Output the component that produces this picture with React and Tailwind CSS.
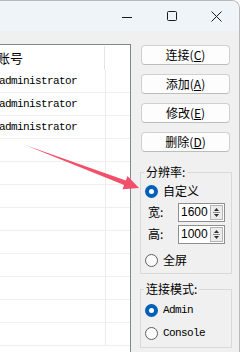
import React from "react";

const cjk = "font-['Noto_Sans_CJK_SC','Noto_Sans_CJK_JP',sans-serif]";
const mono = "font-['Liberation_Mono','DejaVu_Sans_Mono',monospace]";

function Radio({ checked }) {
  if (checked) {
    return (
      <span className="w-[13px] h-[13px] rounded-full bg-[#005fb8] flex items-center justify-center shrink-0">
        <span className="w-[5px] h-[5px] rounded-full bg-white" />
      </span>
    );
  }
  return <span className="w-[13px] h-[13px] rounded-full border border-[#5f5f5f] bg-[#fbfbfb] shrink-0" />;
}

function Btn({ label, k }) {
  return (
    <button className={`w-[89px] h-[20px] rounded-[4px] border border-[#d0d0d0] border-b-[#bcbcbc] bg-[#fdfdfd] text-[12px] leading-none text-black flex items-center justify-center ${cjk}`}>
      {label}(<span className="underline underline-offset-[1px]">{k}</span>)
    </button>
  );
}

function Spin({ value }) {
  return (
    <div className="w-[47px] h-[19px] border border-[#8f8f8f] bg-white flex items-center">
      <span className="flex-1 pl-[2px] text-[12px] leading-none text-black font-['Liberation_Sans',Arial,sans-serif]">{value}</span>
      <svg width="13" height="15" viewBox="0 0 13 15" className="mr-[1px] shrink-0">
        <rect x="0.5" y="0.5" width="12" height="14" fill="#ececec" stroke="#b4b4b4" />
        <path d="M4 6 L9 6 L6.5 3 Z" fill="#303030" />
        <line x1="3" y1="7.5" x2="10" y2="7.5" stroke="#8a8a8a" />
        <path d="M4 9 L9 9 L6.5 12 Z" fill="#303030" />
      </svg>
    </div>
  );
}

const rows = Array.from({ length: 12 });
const names = ["administrator", "administrator", "administrator"];

export default function App() {
  return (
    <div className="relative w-[241px] h-[352px] bg-white overflow-hidden">
      <div className="w-[240px] h-[360px] rounded-tr-[8px] border-t border-r border-[#b8b8b8] bg-[#f0f0f0] overflow-hidden flex flex-col">
        {/* title bar */}
        <div className="h-[30px] shrink-0 bg-[#eff4f9] flex justify-end">
          <div className="w-[45px] flex items-center justify-center">
            <svg width="10" height="10" viewBox="0 0 10 10">
              <line x1="0" y1="6.5" x2="10" y2="6.5" stroke="#1b1b1b" strokeWidth="1" />
            </svg>
          </div>
          <div className="w-[45px] flex items-center justify-center">
            <svg width="10" height="10" viewBox="0 0 10 10">
              <rect x="0.5" y="0.5" width="9" height="9" rx="1" fill="none" stroke="#1b1b1b" strokeWidth="1" />
            </svg>
          </div>
          <div className="w-[45px] flex items-center justify-center">
            <svg width="11" height="11" viewBox="0 0 11 11">
              <path d="M0.5 0.5 L10.5 10.5 M10.5 0.5 L0.5 10.5" stroke="#1b1b1b" strokeWidth="1" />
            </svg>
          </div>
        </div>

        {/* body */}
        <div className="flex flex-1">
          {/* list */}
          <div className="w-[131px] mt-[13px] border-t border-r border-[#828790] bg-white flex flex-col">
            <div className="h-[25px] flex">
              <div className={`w-[107px] -ml-[3px] pl-0 flex items-center text-[13px] text-black ${cjk}`}>账号</div>
              <div className="w-px mt-[1px] bg-[#e5e5e5]" />
            </div>
            {rows.map((_, i) => (
              <div key={i} className="h-[23px] flex border-b border-[#efefef]">
                <div className={`w-[107px] border-r border-[#ececec] flex items-center -ml-[1px] text-[11px] tracking-[-0.6px] text-black ${mono}`}>
                  {names[i] || ""}
                </div>
              </div>
            ))}
          </div>

          {/* right panel */}
          <div className="flex-1 flex flex-col pt-[14px]">
            <div className="pl-[10px] flex flex-col gap-[9px]">
              <Btn label="连接" k="C" />
              <Btn label="添加" k="A" />
              <Btn label="修改" k="E" />
              <Btn label="删除" k="D" />
            </div>

            <fieldset className={`ml-[9px] mt-[12px] w-[92px] border border-[#d9d9d9] pb-[5px] text-[12px] text-black ${cjk}`}>
              <legend className="ml-[3px] px-[2px] leading-[16px]">分辨率:</legend>
              <div className="h-[22px] flex items-center pl-[4px] gap-[5px]">
                <Radio checked />
                <span>自定义</span>
              </div>
              <div className="h-[20px] flex items-center">
                <span className="w-[37px] pl-[7px]">宽:</span>
                <Spin value="1600" />
              </div>
              <div className="h-[20px] mt-[2px] flex items-center">
                <span className="w-[37px] pl-[7px]">高:</span>
                <Spin value="1000" />
              </div>
              <div className="h-[16px] mt-[8px] flex items-center pl-[4px] gap-[5px]">
                <Radio />
                <span>全屏</span>
              </div>
            </fieldset>

            <fieldset className={`ml-[9px] mt-[7px] w-[92px] border border-[#d9d9d9] pt-[5px] pb-[6px] text-[12px] text-black ${cjk}`}>
              <legend className="ml-[3px] px-[2px] leading-[16px]">连接模式:</legend>
              <div className="h-[16px] flex items-center pl-[4px] gap-[5px]">
                <Radio checked />
                <span className={`text-[11px] tracking-[-0.6px] ${mono}`}>Admin</span>
              </div>
              <div className="h-[16px] mt-[7px] flex items-center pl-[4px] gap-[5px]">
                <Radio />
                <span className={`text-[11px] tracking-[-0.6px] ${mono}`}>Console</span>
              </div>
            </fieldset>
          </div>
        </div>
      </div>

      <svg className="absolute inset-0 pointer-events-none" width="241" height="352" viewBox="0 0 241 352">
        <polygon
          points="25,145 125.9,180.4 127.5,176.1 139,188 122.5,189.2 124.1,185.0"
          fill="#f24f6b"
        />
      </svg>
    </div>
  );
}
